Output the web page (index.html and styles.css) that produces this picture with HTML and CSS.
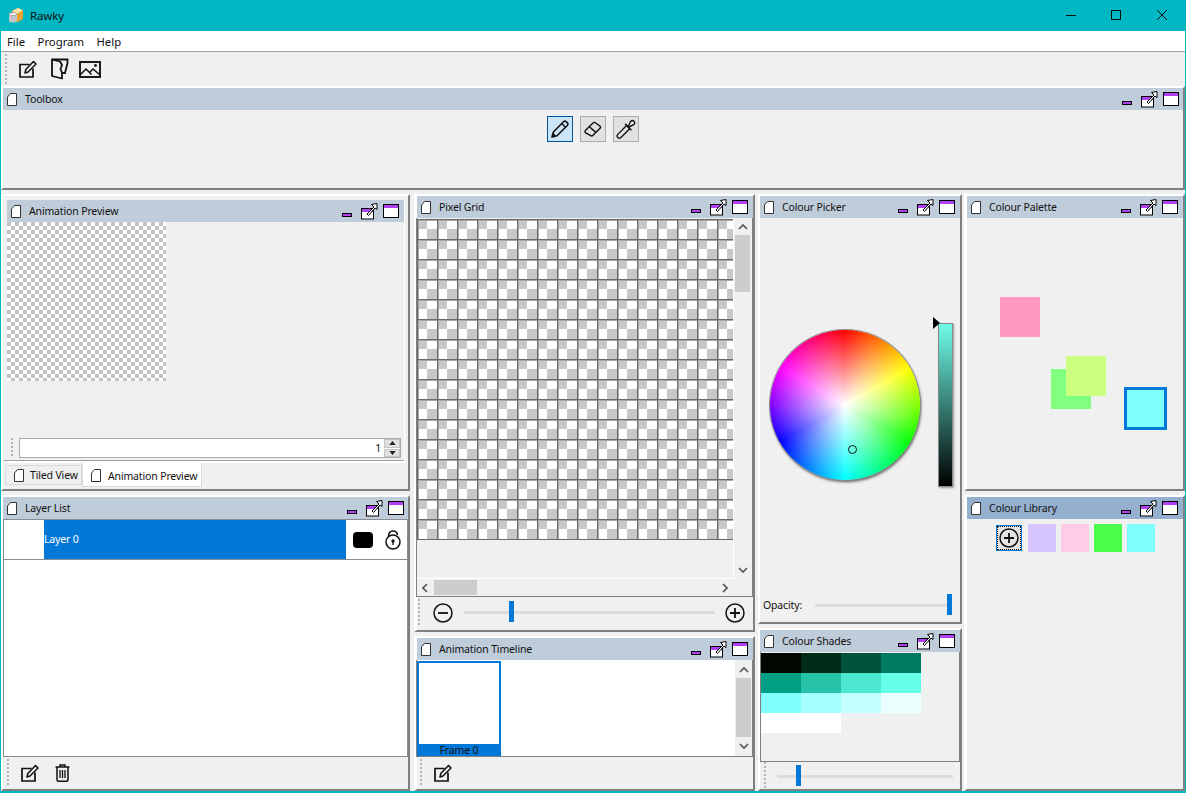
FILE: index.html
```html
<!DOCTYPE html>
<html lang="en">
<head>
<meta charset="utf-8">
<title>Rawky</title>
<link rel="stylesheet" href="styles.css">
</head>
<body>
<svg class="defs" width="0" height="0" aria-hidden="true">
  <defs>
    <pattern id="cell" width="20" height="20" patternUnits="userSpaceOnUse">
      <rect width="20" height="20" fill="#fff"/>
      <rect width="10" height="10" fill="#c8c8c8"/>
      <rect x="10" y="10" width="10" height="10" fill="#c8c8c8"/>
      <rect width="20" height="2" fill="#a8a8a8"/>
      <rect width="2" height="20" fill="#a8a8a8"/>
      <rect width="20" height="1" fill="#6a6a6a"/>
      <rect width="1" height="20" fill="#6a6a6a"/>
    </pattern>
    <pattern id="fine" width="8" height="8" patternUnits="userSpaceOnUse">
      <rect width="8" height="8" fill="#fff"/>
      <rect width="4" height="4" fill="#c4c4c4"/>
      <rect x="4" y="4" width="4" height="4" fill="#c4c4c4"/>
    </pattern>
  </defs>
  <symbol id="page" viewBox="0 0 10 13">
    <path d="M3.500 .5H9.500V12.500H.5V4Z" fill="#fff" stroke="#333" stroke-width="1"/>
  </symbol>
  <symbol id="btns" viewBox="0 0 58 17">
    <rect x="0.5" y="10.5" width="9" height="3" fill="#b040f0" stroke="#000"/>
    <rect x="19.5" y="5.5" width="12" height="10.5" fill="#fff" stroke="#000"/>
    <rect x="20" y="6" width="11" height="3" fill="#b040f0"/>
    <path d="M25 11l7-7-2.500-2.500 5.500-1 0 6-2-1.500-6.500 7.500z" fill="#fff" stroke="#000" stroke-width="1"/>
    <rect x="41.500" y="1.500" width="15" height="13" fill="#fff" stroke="#000"/>
    <rect x="42" y="2" width="14" height="3" fill="#b040f0"/>
  </symbol>
  <symbol id="note" viewBox="0 0 18 18">
    <path d="M10.500 4.500H1V17H14V8.500" fill="none" stroke="#111" stroke-width="1.700"/>
    <path d="M6 13l.8-3.500L14.500 1.500l2.500 2.500-8 8Z" fill="none" stroke="#111" stroke-width="1.500" stroke-linejoin="round"/>
  </symbol>
  <symbol id="book" viewBox="0 0 18 22">
    <path d="M1 1.500H16.500V5L14 15H11.500" fill="none" stroke="#111" stroke-width="1.800"/>
    <path d="M1 1.500V18L11 20.500V15L9.500 11 11 7 9 3.500Z" fill="none" stroke="#111" stroke-width="1.800" stroke-linejoin="round"/>
  </symbol>
  <symbol id="image" viewBox="0 0 22 17">
    <rect x="1" y="1" width="20" height="15" fill="none" stroke="#111" stroke-width="1.900"/>
    <path d="M1.500 13.500 7 8l5.500 5.500M11 11l3-3 6.500 5.500" fill="none" stroke="#111" stroke-width="1.500"/>
    <circle cx="16.500" cy="4.500" r="1.400" fill="#111"/>
  </symbol>
  <symbol id="pencil" viewBox="0 0 18 18">
    <path d="M1 17l1.400-5L12.500 1.800c.8-.8 2-.8 2.800 0l1 .9c.7.8.7 2 0 2.800L6 15.700Z" fill="none" stroke="#111" stroke-width="1.600" stroke-linejoin="round"/>
    <path d="M1 17l1.200-4.200 3 3Z" fill="#111"/>
    <path d="M10.700 3.500l4 4" stroke="#111" stroke-width="1.400"/>
  </symbol>
  <symbol id="eraser" viewBox="0 0 20 18">
    <path d="M1.800 10.500 10 2.300c.9-.9 2.200-.9 3 0l4.600 3.300c.8.800.8 2.100 0 2.900L10 16c-.9.900-2.100.9-3 0L1.800 13.400c-.8-.8-.8-2.100 0-2.900Z" fill="none" stroke="#111" stroke-width="1.600"/>
    <path d="M6 6.500 13.500 13" stroke="#111" stroke-width="1.600"/>
  </symbol>
  <symbol id="dropper" viewBox="0 0 20 20">
    <path d="M1.800 18.500c-1-1-1-1.600-.4-2.600L10.500 6.500l3.200 3.200-9 9c-1 .8-2 .7-2.900-.2Z" fill="none" stroke="#111" stroke-width="1.300" stroke-linejoin="round"/>
    <path d="M9 4.800l6.400 6.400" fill="none" stroke="#111" stroke-width="1.500"/>
    <path d="M12.200 7.500 14.500 2.500c.9-1.300 2.500-1.400 3.500-.3 1 1 .9 2.500-.2 3.400L12.800 8" fill="none" stroke="#111" stroke-width="1.400"/>
  </symbol>
  <symbol id="minus" viewBox="0 0 20 20">
    <circle cx="10" cy="10" r="9" fill="none" stroke="#111" stroke-width="1.500"/>
    <path d="M5 10h10" stroke="#111" stroke-width="1.800"/>
  </symbol>
  <symbol id="plus" viewBox="0 0 20 20">
    <circle cx="10" cy="10" r="9" fill="none" stroke="#111" stroke-width="1.500"/>
    <path d="M5 10h10M10 5v10" stroke="#111" stroke-width="1.800"/>
  </symbol>
  <symbol id="trash" viewBox="0 0 15 18">
    <path d="M.5 3h14M5 3V1h5v2" fill="none" stroke="#111" stroke-width="1.400"/>
    <path d="M2 3v12.500c0 1 .7 1.800 1.600 1.800h7.800c.9 0 1.600-.8 1.600-1.800V3" fill="none" stroke="#111" stroke-width="1.500"/>
    <path d="M5 6v8M7.500 6v8M10 6v8" stroke="#111" stroke-width="1.300"/>
  </symbol>
  <symbol id="lock" viewBox="0 0 16 20">
    <circle cx="8" cy="12" r="7" fill="none" stroke="#111" stroke-width="1.500"/>
    <path d="M3.500 6.500C3.500 3 5.500 1 8 1s4.200 1.500 4.500 4" fill="none" stroke="#111" stroke-width="1.500"/>
    <circle cx="8" cy="11" r="1.700" fill="#111"/>
    <path d="M8 11v4" stroke="#111" stroke-width="1.300"/>
  </symbol>
  <symbol id="up" viewBox="0 0 10 6"><path d="M1 5l4-4 4 4" fill="none" stroke="#555" stroke-width="1.700"/></symbol>
  <symbol id="down" viewBox="0 0 10 6"><path d="M1 1l4 4 4-4" fill="none" stroke="#555" stroke-width="1.700"/></symbol>
  <symbol id="left" viewBox="0 0 6 10"><path d="M5 1 1 5l4 4" fill="none" stroke="#555" stroke-width="1.700"/></symbol>
  <symbol id="right" viewBox="0 0 6 10"><path d="M1 1l4 4-4 4" fill="none" stroke="#555" stroke-width="1.700"/></symbol>
  <symbol id="sup" viewBox="0 0 8 5"><path d="M0 5 4 0l4 5Z" fill="#222"/></symbol>
  <symbol id="sdown" viewBox="0 0 8 5"><path d="M0 0l4 5 4-5Z" fill="#222"/></symbol>
</svg>

<div class="window">
  <header class="titlebar">
    <svg class="logo" viewBox="0 0 16 16">
      <path d="M4 4 10 1l5 2.500v8L10 15 4 12Z" fill="#f0b23c"/>
      <path d="M4 4 10 1l5 2.500L9.500 6.500Z" fill="#fde7ae"/>
      <path d="M9.500 6.500 15 3.500v8L9.500 15Z" fill="#e8a033"/>
      <path d="M1 7h8v6.500C9 15 7.500 15.500 5 15.500S1 15 1 13.500Z" fill="#c4c4c4"/>
      <ellipse cx="5" cy="7" rx="4" ry="1.500" fill="#f6f6f6" stroke="#777" stroke-width=".5"/>
    </svg>
    <span class="apptitle">Rawky</span>
    <div class="winctl">
      <svg class="wbtn" viewBox="0 0 10 10"><path d="M0 5.500h10" stroke="#111" stroke-width="1"/></svg>
      <svg class="wbtn" viewBox="0 0 10 10"><rect x=".5" y=".5" width="9" height="9" fill="none" stroke="#111"/></svg>
      <svg class="wbtn" viewBox="0 0 10 10"><path d="M0 0l10 10M10 0 0 10" stroke="#111" stroke-width="1"/></svg>
    </div>
  </header>

  <nav class="menubar">
    <span class="menu">File</span><span class="menu">Program</span><span class="menu">Help</span>
  </nav>

  <div class="toolbar main-tools">
    <div class="grip"></div>
    <svg class="ic note"><use href="#note"/></svg>
    <svg class="ic book"><use href="#book"/></svg>
    <svg class="ic image"><use href="#image"/></svg>
  </div>

  <section class="dock toolbox">
    <div class="title"><svg class="pg"><use href="#page"/></svg><span class="tt">Toolbox</span><svg class="tb"><use href="#btns"/></svg></div>
    <div class="toolbox-body">
      <button class="tool sel"><svg class="t-ic"><use href="#pencil"/></svg></button>
      <button class="tool"><svg class="t-ic"><use href="#eraser"/></svg></button>
      <button class="tool"><svg class="t-ic drop"><use href="#dropper"/></svg></button>
    </div>
  </section>

  <main class="columns">
    <div class="col col1">
      <section class="dock preview">
        <div class="pane">
          <div class="title narrow"><svg class="pg"><use href="#page"/></svg><span class="tt">Animation Preview</span><svg class="tb"><use href="#btns"/></svg></div>
          <div class="pv-body"><svg class="checker" shape-rendering="crispEdges"><rect width="159" height="159" fill="url(#fine)"/></svg></div>
          <div class="spinrow">
            <div class="grip short"></div>
            <div class="spin">
              <span class="spinval">1</span>
              <div class="spinbtns">
                <span class="sb"><svg class="sarrow"><use href="#sup"/></svg></span>
                <span class="sb"><svg class="sarrow"><use href="#sdown"/></svg></span>
              </div>
            </div>
          </div>
        </div>
        <div class="tabs">
          <div class="tab"><svg class="pg"><use href="#page"/></svg><span>Tiled View</span></div>
          <div class="tab on"><svg class="pg"><use href="#page"/></svg><span>Animation Preview</span></div>
        </div>
      </section>
      <section class="dock layers">
        <div class="title edge"><svg class="pg"><use href="#page"/></svg><span class="tt">Layer List</span><svg class="tb"><use href="#btns"/></svg></div>
        <div class="listbox">
          <div class="layer">
            <div class="thumb"></div>
            <div class="lname">Layer 0</div>
            <div class="lctl"><span class="blob"></span><svg class="lockic"><use href="#lock"/></svg></div>
          </div>
        </div>
        <div class="toolbar foot">
          <div class="grip foot-grip"></div>
          <svg class="ic note"><use href="#note"/></svg>
          <svg class="ic trash"><use href="#trash"/></svg>
        </div>
      </section>
    </div>

    <div class="col col2">
      <section class="dock gridpanel">
        <div class="title"><svg class="pg"><use href="#page"/></svg><span class="tt">Pixel Grid</span><svg class="tb"><use href="#btns"/></svg></div>
        <div class="scrollarea">
          <div class="sa-top">
            <div class="viewport">
              <svg class="pixels" shape-rendering="crispEdges"><rect width="321" height="321" fill="url(#cell)"/></svg>
            </div>
            <div class="vbar">
              <svg class="arr-v"><use href="#up"/></svg>
              <div class="vtrack"><div class="vthumb grid-v"></div></div>
              <svg class="arr-v"><use href="#down"/></svg>
            </div>
          </div>
          <div class="hbar">
            <svg class="arr-h"><use href="#left"/></svg>
            <div class="htrack"><div class="hthumb"></div></div>
            <svg class="arr-h"><use href="#right"/></svg>
          </div>
        </div>
        <div class="zoombar">
          <div class="grip foot-grip"></div>
          <svg class="zic"><use href="#minus"/></svg>
          <div class="slider zoomslider"><div class="handle"></div></div>
          <svg class="zic"><use href="#plus"/></svg>
        </div>
      </section>
      <section class="dock timeline">
        <div class="title"><svg class="pg"><use href="#page"/></svg><span class="tt">Animation Timeline</span><svg class="tb"><use href="#btns"/></svg></div>
        <div class="tl-list">
          <div class="frames">
            <div class="frame"><div class="frame-img"></div><div class="frame-label">Frame 0</div></div>
          </div>
          <div class="vbar tl-bar">
            <svg class="arr-v"><use href="#up"/></svg>
            <div class="vtrack"><div class="vthumb tl-v"></div></div>
            <svg class="arr-v"><use href="#down"/></svg>
          </div>
        </div>
        <div class="toolbar foot tl-foot">
          <div class="grip foot-grip"></div>
          <svg class="ic note tl-note"><use href="#note"/></svg>
        </div>
      </section>
    </div>

    <div class="col col3">
      <section class="dock picker">
        <div class="title"><svg class="pg"><use href="#page"/></svg><span class="tt">Colour Picker</span><svg class="tb"><use href="#btns"/></svg></div>
        <div class="picker-body">
          <div class="wheel-row">
            <div class="wheel"><span class="wheel-dot"></span></div>
            <div class="value-wrap">
              <span class="value-mark"></span>
              <div class="value"></div>
            </div>
          </div>
          <div class="opacity">
            <span class="lbl">Opacity:</span>
            <div class="slider opslider"><div class="handle"></div></div>
          </div>
        </div>
      </section>
      <section class="dock shades">
        <div class="title"><svg class="pg"><use href="#page"/></svg><span class="tt">Colour Shades</span><svg class="tb"><use href="#btns"/></svg></div>
        <div class="shade-frame">
          <div class="shade-grid">
            <i class="s s1"></i><i class="s s2"></i><i class="s s3"></i><i class="s s4"></i>
            <i class="s s5"></i><i class="s s6"></i><i class="s s7"></i><i class="s s8"></i>
            <i class="s s9"></i><i class="s s10"></i><i class="s s11"></i><i class="s s12"></i>
            <i class="s s13"></i><i class="s s14"></i>
          </div>
        </div>
        <div class="shade-foot">
          <div class="grip foot-grip"></div>
          <div class="slider shadeslider"><div class="handle"></div></div>
        </div>
      </section>
    </div>

    <div class="col col4">
      <section class="dock palette">
        <div class="title"><svg class="pg"><use href="#page"/></svg><span class="tt">Colour Palette</span><svg class="tb"><use href="#btns"/></svg></div>
        <div class="palette-body">
          <span class="chip c-pink"></span>
          <span class="chip c-green"></span>
          <span class="chip c-lime"></span>
          <span class="chip c-cyan"></span>
        </div>
      </section>
      <section class="dock library">
        <div class="title lib-title"><svg class="pg"><use href="#page"/></svg><span class="tt">Colour Library</span><svg class="tb"><use href="#btns"/></svg></div>
        <div class="lib-row">
          <div class="addbtn"><svg class="addic"><use href="#plus"/></svg></div>
          <span class="lib l1"></span><span class="lib l2"></span><span class="lib l3"></span><span class="lib l4"></span>
        </div>
      </section>
    </div>
  </main>
</div>
</body>
</html>
```

FILE: styles.css
```css
* { box-sizing: border-box; }
html, body { margin: 0; padding: 0; height: 793px; overflow: hidden; }
body { font-family: "Noto Sans", "Liberation Sans", sans-serif; font-size: 10.5px; letter-spacing: -.15px; color: #111; background: #f0f0f0; }
.defs { position: absolute; }
svg { display: block; flex: none; }
.window { width: 1186px; height: 793px; border: solid #00b7c3; border-width: 0 1px 2px 1px; display: flex; flex-direction: column; background: #f0f0f0; }

.titlebar { height: 31px; margin: 0 -1px; background: #00b7c3; display: flex; align-items: center; padding-left: 8px; flex: none; }
.logo { width: 16px; height: 16px; margin-top: -1px; }
.apptitle { margin-left: 6px; font-size: 11.5px; color: #111; }
.winctl { margin-left: auto; display: flex; padding-right: 19px; margin-top: -1px; gap: 35px; }
.wbtn { width: 10px; height: 10px; }
.wbtn:last-child { margin-left: 1px; }

.menubar { height: 21px; flex: none; background: #fff; border-bottom: 1px solid #a0a0a0; display: flex; padding-left: 6px; gap: 12.5px; align-items: center; }
.menu { font-size: 11.3px; letter-spacing: 0; }

.grip { width: 2px; height: 30px; background: repeating-linear-gradient(#b4b4b4 0 2px, transparent 2px 4px); flex: none; }
.toolbar { display: flex; align-items: center; flex: none; }
.main-tools { height: 34px; padding-left: 4px; }
.ic { display: block; }
.note { width: 18px; height: 18px; margin-left: 12px; }
.book { width: 18px; height: 22px; margin-left: 14px; }
.image { width: 22px; height: 17px; margin-left: 10px; }

.dock { background: #f0f0f0; border: 2px solid; border-color: #fff #808080 #808080 #fff; display: flex; flex-direction: column; }
.title { height: 22px; flex: none; background: #bfccda; display: flex; align-items: center; padding: 0 4px; }
.pg { width: 10px; height: 13px; }
.tt { margin-left: 8px; margin-top: -1px; }
.tb { width: 58px; height: 17px; margin-left: auto; margin-top: 1px; }
.title.edge, .toolbox .title { padding-right: 3px; }

.toolbox { height: 104px; flex: none; }
.toolbox-body { display: flex; justify-content: center; gap: 7px; padding-top: 6px; }
.tool { width: 26px; height: 26px; padding: 0; background: #e1e1e1; border: 1px solid #adadad; display: flex; align-items: center; justify-content: center; }
.tool.sel { background: #cce4f7; border: 1px solid #005499; }
.t-ic { width: 18px; height: 18px; }
.t-ic.drop { width: 20px; height: 20px; }

.columns { flex: 1; display: flex; padding-top: 4px; min-height: 0; }
.col { display: flex; flex-direction: column; gap: 4px; }
.col1 { width: 409px; }
.col2 { width: 341px; margin-left: 4px; }
.col3 { width: 204px; margin-left: 3px; }
.col4 { width: 221px; margin-left: 2px; }
.col2 .dock, .col4 .dock { border-left-width: 3px; }

.preview { height: 297px; flex: none; padding: 4px 0 0 0; }
.pane { margin: 0 3px 0 4px; height: 263px; border: solid #fff; border-width: 0 1px 2px 0; display: flex; flex-direction: column; flex: none; }
.pv-body { flex: 1; min-height: 0; }
.checker { width: 159px; height: 159px; }
.spinrow { height: 25px; flex: none; border-bottom: 1px solid #a0a0a0; display: flex; align-items: center; padding-left: 7px; margin-left: -3px; }
.grip.short { height: 20px; }
.spin { margin-left: 6px; width: 382px; height: 20px; background: #fff; border: 1px solid #ababab; display: flex; align-items: center; justify-content: flex-end; }
.spinval { margin-right: 3px; }
.spinbtns { width: 16px; height: 18px; display: flex; flex-direction: column; gap: 1px; }
.sb { flex: 1; background: #e1e1e1; border: 1px solid #c4c4c4; display: flex; align-items: center; justify-content: center; }
.sarrow { width: 7px; height: 4px; }
.tabs { display: flex; padding: 2px 0 0 2px; align-items: flex-start; white-space: nowrap; }
.tab { height: 20px; width: 77px; background: #f0f0f0; border: 1px solid #d9d9d9; display: flex; align-items: center; padding-left: 8px; gap: 6px; }
.tab.on { width: 120px; height: 24px; background: #fff; border-top: 0; margin-top: -2px; padding: 2px 0 0 8px; gap: 7px; }
.tab .pg { margin: 0; }

.layers { flex: 1; }
.listbox { height: 238px; flex: none; background: #fff; border: 1px solid #8c8c96; }
.layer { height: 40px; display: flex; border-bottom: 1px solid #8c8c96; }
.thumb { width: 40px; background: #fff; }
.lname { width: 302px; background: #0078d7; color: #fff; display: flex; align-items: center; padding-bottom: 1px; }
.lctl { flex: 1; display: flex; align-items: center; padding-left: 7px; }
.blob { width: 20px; height: 16px; background: #000; border-radius: 4px; }
.lockic { width: 16px; height: 20px; margin-left: 12px; }
.foot { flex: 1; padding-left: 4px; }
.foot-grip { height: 28px; }
.foot .note { margin-left: 12px; }
.trash { width: 15px; height: 18px; margin-left: 16px; }

.gridpanel { height: 438px; flex: none; }
.scrollarea { height: 379px; flex: none; border: solid #808080; border-width: 0 1px 1px 0; box-shadow: -1px 0 0 #808080; display: flex; flex-direction: column; }
.sa-top { flex: 1; display: flex; min-height: 0; }
.viewport { width: 317px; overflow: hidden; border: solid #fff; border-width: 0 1px 1px 0; }
.pixels { width: 321px; height: 321px; margin-top: 1px; }
.vbar { width: 17px; flex: none; display: flex; flex-direction: column; align-items: center; padding: 6px 0; }
.arr-v { width: 10px; height: 6px; flex: none; }
.vtrack { flex: 1; width: 100%; padding: 5px 1px; }
.vthumb { background: #cdcdcd; width: 15px; }
.grid-v { height: 57px; }
.hbar { height: 17px; flex: none; display: flex; align-items: center; padding: 0 24px 0 5px; }
.arr-h { width: 6px; height: 10px; flex: none; }
.htrack { flex: 1; padding: 1px 6px; height: 17px; }
.hthumb { width: 43px; height: 15px; background: #cdcdcd; }
.zoombar { flex: 1; display: flex; align-items: center; padding-bottom: 2px; }
.zoombar .grip { margin-left: 1px; }
.zic { width: 20px; height: 20px; margin-left: 13px; }
.slider { height: 3px; background: #dcdcdc; position: relative; flex: none; }
.handle { position: absolute; top: -10px; width: 5px; height: 21px; background: #0078d7; }
.zoomslider { width: 251px; margin-left: 11px; }
.zoomslider .handle { left: 45px; }
.zoomslider + .zic { margin-left: 10px; }

.timeline { flex: 1; min-height: 0; }
.tl-list { height: 97px; flex: none; background: #fff; border: solid #808080; border-width: 0 1px 1px 0; box-shadow: -1px 0 0 #808080; display: flex; }
.frames { flex: 1; padding-top: 1px; }
.frame { width: 84px; height: 95px; background: #0078d7; display: flex; flex-direction: column; padding: 2px 2px 0; }
.frame-img { height: 81px; background: #fff; }
.frame-label { text-align: center; line-height: 12px; margin: 0 -2px; color: #111; }
.tl-bar { padding: 7px 0; background: #f0f0f0; }
.tl-v { height: 59px; }
.tl-foot { padding-left: 3px; }
.foot .tl-note { margin-left: 12px; }

.picker { height: 430px; flex: none; }
.picker-body { flex: 1; display: flex; flex-direction: column; justify-content: space-between; }
.wheel-row { display: flex; padding: 99px 0 0 10px; }
.wheel { width: 150px; height: 150px; margin-top: 13px; border-radius: 50%; position: relative; box-shadow: 0 0 0 1px #8a8a8a, 1px 2px 3px #555; background:
  radial-gradient(circle closest-side, #fff 0, rgba(255,255,255,0) 100%),
  conic-gradient(#f00, #ff0, #0f0, #0ff, #00f, #f0f, #f00); }
.wheel-dot { position: absolute; left: 78px; top: 115px; width: 9px; height: 9px; border: 1px solid #111; border-radius: 50%; }
.value-wrap { position: relative; margin-left: 18px; }
.value { width: 15px; height: 164px; margin-top: 6px; background: linear-gradient(#6ffde8, #000); border: 1px solid #888; box-shadow: 1px 1px 2px #999; }
.value-mark { position: absolute; left: -5px; top: 0; border: solid transparent; border-width: 6.500px 0 6.500px 7px; border-left-color: #000; }
.opacity { display: flex; align-items: center; height: 22px; margin-bottom: 6px; padding-left: 3px; }
.lbl { width: 52px; }
.opslider { width: 137px; }
.opslider .handle { right: 0; }

.shades { flex: 1; min-height: 0; }
.shade-frame { height: 110px; flex: none; border: 1px solid #808080; border-top-width: 0; padding-top: 1px; }
.shade-grid { display: grid; grid-template-columns: repeat(4, 40px); grid-auto-rows: 20px; }
.s1 { background: #000600; } .s2 { background: #002b16; } .s3 { background: #00523a; } .s4 { background: #007a60; }
.s5 { background: #009e82; } .s6 { background: #26c2a8; } .s7 { background: #4de8d0; } .s8 { background: #66ffe8; }
.s9 { background: #80ffff; } .s10 { background: #a6ffff; } .s11 { background: #c4ffff; } .s12 { background: #ecffff; }
.s13, .s14 { background: #fff; }
.shade-foot { flex: 1; display: flex; align-items: center; padding-left: 4px; }
.shadeslider { width: 176px; margin-left: 11px; }
.shadeslider .handle { left: 19px; }

.palette { height: 297px; flex: none; }
.palette-body { flex: 1; position: relative; }
.chip { position: absolute; width: 40px; height: 40px; }
.c-pink { left: 33px; top: 79px; background: #ff99c2; }
.c-green { left: 84px; top: 151px; background: #80ff80; }
.c-lime { left: 99px; top: 138px; background: #ccff80; }
.c-cyan { left: 157px; top: 169px; width: 43px; height: 43px; background: #80ffff; border: 3px solid #0078d7; }
.library { flex: 1; min-height: 0; }
.lib-title { background: #95b0cf; }
.lib-row { display: flex; padding: 5px 0 0 29px; gap: 5px; align-items: flex-start; }
.addbtn { width: 26px; height: 26px; margin-top: 1px; margin-right: 1px; border: 1px solid #0078d7; outline: 1px dotted #111; outline-offset: -2px; background: #e5e5e5; display: flex; align-items: center; justify-content: center; }
.addic { width: 20px; height: 20px; }
.lib { width: 28px; height: 28px; }
.l1 { background: #d4c4ff; } .l2 { background: #ffcce5; } .l3 { background: #4cff4c; } .l4 { background: #80ffff; }
```
